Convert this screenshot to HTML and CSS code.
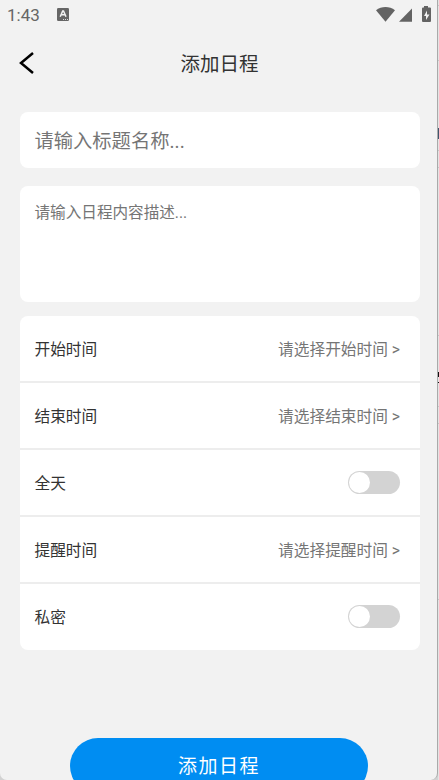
FILE: index.html
```html
<!DOCTYPE html>
<html lang="zh-CN">
<head>
<meta charset="utf-8">
<title>添加日程</title>
<link rel="stylesheet" href="styles.css">
</head>
<body>
<div class="window">
  <main class="screen">
    <div class="status">
      <span class="clock">1:43</span>
      <svg class="badge" viewBox="0 0 12 13"><rect width="12" height="13" rx="1.3" fill="#666"/><path d="M3.2 8.800 5.700 3h.8L9 8.800M4.200 6.800h3.700" fill="none" stroke="#f2f2f2" stroke-width="1.500"/><path d="M6 11.500h5" stroke="#ddd" stroke-dasharray="1 1"/></svg>
      <svg class="signals" viewBox="0 0 56 18">
        <path d="M0 4.200C5.500-.2 13.500-.2 19 4.200L9.500 15.700Z"/>
        <path d="M23 15.800 36 2.500V15.800Z"/>
        <path d="M48 0h4v1.500h2q1 0 1 1V15q0 1-1 1h-7q-1 0-1-1V2.500q0-1 1-1h1Z"/>
        <path d="M51 4.500 48 10h2v4L53.500 8.500h-2.500Z" fill="#f2f2f2"/>
      </svg>
    </div>
    <header class="header">
      <svg class="back" viewBox="0 0 16 24"><path d="M15 2 3 12l12 10" fill="none" stroke="#000" stroke-width="2.500"/></svg>
      <h1>添加日程</h1>
    </header>
    <div class="field title-field">请输入标题名称...</div>
    <div class="field description">请输入日程内容描述...</div>
    <section class="options">
      <div class="row"><span>开始时间</span><span class="value">请选择开始时间 &gt;</span></div>
      <div class="row"><span>结束时间</span><span class="value">请选择结束时间 &gt;</span></div>
      <div class="row"><span>全天</span><span class="switch"></span></div>
      <div class="row"><span>提醒时间</span><span class="value">请选择提醒时间 &gt;</span></div>
      <div class="row"><span>私密</span><span class="switch"></span></div>
    </section>
    <div class="submit">添加日程</div>
  </main>
  <aside class="edge">
    <svg viewBox="0 0 2 780">
      <path d="M0 5.500h2M0 60.500h2M0 150.500h2M0 167.500h2M0 335.500h2M0 406.500h2M0 423.500h2M0 599.500h2" stroke="#c8c8c8"/>
      <path d="M0 128h2v2H1v3h1v2H1v4H0Z" fill="#41566d"/>
      <path d="M0 372h1l1 2v3H0ZM0 382h2v1H0Z" fill="#111"/>
    </svg>
  </aside>
</div>
</body>
</html>
```
FILE: styles.css
```css
* { box-sizing: border-box; }
body {
  margin: 0;
  overflow: hidden;
  font-family: Roboto, "Noto Sans CJK SC", sans-serif;
  color: #333;
}
.window { display: flex; height: 780px; overflow: hidden; background: #d2d2d2; }
.screen {
  width: 438px;
  height: 780px;
  overflow: hidden;
  padding: 0 17px 0 20px;
  background: #f2f2f2;
  border-right: 1px solid #aaa;
  border-radius: 0 0 7px 7px;
}
.edge { width: 1px; background: #e4e4e4; }
.edge svg { display: block; width: 2px; height: 780px; }
.status { display: flex; align-items: flex-start; height: 32px; margin: 0 -13px 0 -13px; color: #666; }
.clock { width: 50px; padding-top: 5px; font-size: 17px; line-height: 20px; }
.badge { width: 12px; height: 13px; margin-top: 8px; }
.signals { width: 56px; height: 18px; margin: 6px 1px 0 auto; fill: #636363; }
.header { display: flex; align-items: center; height: 62px; margin-bottom: 18px; }
.back { width: 16px; height: 24px; margin-left: -2px; }
h1 { flex: 1; margin: 4px 17px 0 2px; font-size: 19.500px; font-weight: 400; line-height: 28px; text-align: center; }
.field { padding: 0 15px 0 14.500px; background: #fff; border-radius: 8px; color: #757575; }
.title-field { height: 56px; padding-top: 2px; margin-bottom: 18px; font-size: 19.300px; line-height: 56px; }
.description { height: 116px; padding-top: 15px; margin-bottom: 14px; font-size: 15.600px; line-height: 24px; }
.options { height: 334px; background: #fff; border-radius: 8px; }
.row {
  display: flex;
  align-items: center;
  justify-content: space-between;
  height: 67px;
  padding: 0 20px 0 14.500px;
  border-bottom: 2px solid #ededed;
  font-size: 15.700px;
}
.row:last-child { height: 65px; border: 0; }
.value { color: #757575; }
.switch { width: 52px; height: 23px; padding: 1px; background: #d3d3d3; border-radius: 12px; }
.switch::before { content: ""; display: block; width: 21px; height: 21px; background: #fff; border-radius: 50%; }
.submit {
  width: 298px;
  height: 56px;
  margin: 88px 0 0 50px;
  background: #008df2;
  border-radius: 28px;
  color: #fff;
  font-size: 19px;
  letter-spacing: 1.500px;
  line-height: 58px;
  text-align: center;
}
```
